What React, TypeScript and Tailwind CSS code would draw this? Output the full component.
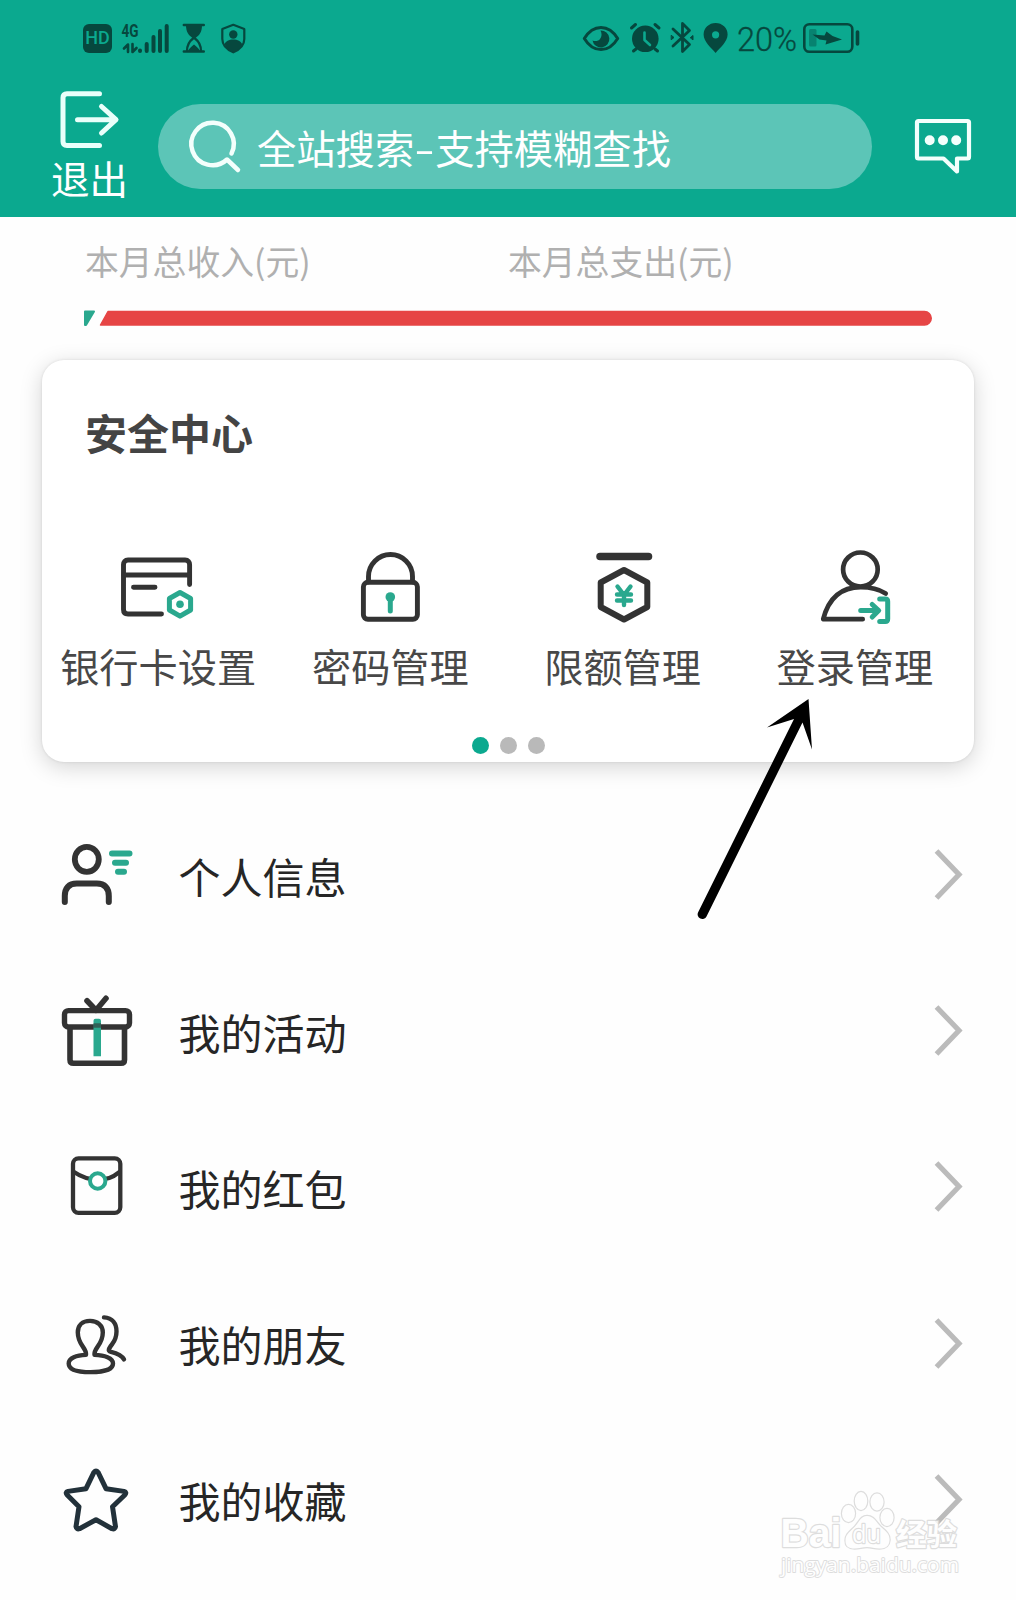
import React from "react";

type IconProps = {
  box: string;
  className: string;
  children: React.ReactNode;
};

const DARK = "#333333";
const TEAL = "#2aa88e";
const INK = "#06483e";

function Icon({ box, className, children }: IconProps) {
  return (
    <svg
      viewBox={box}
      className={"block shrink-0 overflow-visible " + className}
      fill="none"
      strokeLinecap="round"
      strokeLinejoin="round"
      aria-hidden="true"
    >
      {children}
    </svg>
  );
}

function StatusBar() {
  return (
    <div className="flex h-[76px] items-center pl-[83px] text-[#06483e]">
      <div className="flex h-[29px] w-[29px] items-center justify-center rounded-[6px] bg-[#06483e] font-['Roboto',sans-serif] text-[18px] leading-none font-medium text-[#0ba98f]">
        HD
      </div>
      <Icon box="121 22 49 31" className="ml-[9px] h-[31px] w-[49px]">
        <text x="121.5" y="36" textLength="17" lengthAdjust="spacingAndGlyphs" fill={INK} fontFamily="Roboto" fontWeight="700" fontSize="18">
          4G
        </text>
        <g stroke={INK} strokeWidth="4">
          <path d="M140 49.5v.5M146.700 43v7M153.500 36v14M160 30v20M166.700 25v25" />
        </g>
        <path d="M128 51V43.500l-4 4M132.500 43v8l4-4" stroke={INK} strokeWidth="2.600" />
      </Icon>
      <Icon box="183 24 22 29" className="ml-[13px] h-[29px] w-[22px]">
        <path d="M183.800 25h20M183.800 51.500h20" stroke={INK} strokeWidth="2.400" />
        <path d="M186 25h16c0 7-2.500 10-6.500 13h-3c-4-3-6.500-6-6.500-13z" fill={INK} />
        <path d="M187 51c0-6 2-9.500 6-12.500h2c4 3 6 6.500 6 12.500" stroke={INK} strokeWidth="2.200" />
        <path d="M188 51c1.500-3 3.500-4.500 6-6.500 2.500 2 4.500 3.500 6 6.500z" fill={INK} />
      </Icon>
      <Icon box="221 23 25 31" className="ml-[16px] h-[31px] w-[25px]">
        <path d="M233.300 24.800l11 4.200v10c0 6.500-4.500 10.500-11 13.300-6.500-2.800-11-6.800-11-13.300V29z" stroke={INK} strokeWidth="2.200" />
        <circle cx="233.300" cy="34.500" r="4.200" fill={INK} />
        <path d="M224.500 44.500c1-3.500 4.500-5 8.800-5s7.800 1.500 8.800 5c-1.800 3.700-5 6-8.800 7.800-3.800-1.800-7-4.100-8.800-7.800z" fill={INK} />
      </Icon>
      <Icon box="582 25 38 25" className="ml-[336px] h-[25px] w-[38px]">
        <path d="M584.300 37.500c9-14.800 24.400-14.800 33.400 0-9 14.800-24.400 14.800-33.400 0z" stroke={INK} strokeWidth="3" />
        <path d="M600.500 29.500a8.500 8.500 0 1 1-8 10c3 1.200 6 .5 7.500-1.500 2-2.500 2-5.500.5-8.500z" fill={INK} />
      </Icon>
      <Icon box="629 23 33 30" className="ml-[9px] h-[30px] w-[33px]">
        <circle cx="645.300" cy="38.800" r="13.300" fill={INK} />
        <path d="M631.500 28l4-3.500M659 28l-4-3.500M636 49l-2.500 2M655 49l2.500 2" stroke={INK} strokeWidth="3" />
        <path d="M644.500 32.500v7.500l5.500 5" stroke="#0ba98f" strokeWidth="2.600" />
      </Icon>
      <Icon box="671 22 24 32" className="ml-[9px] h-[32px] w-[24px]">
        <path d="M673 29l16.500 15.500-7 7V23.500l7 7L673 46" stroke={INK} strokeWidth="2.800" />
        <path d="M690.500 37.500l2.500-2v4zM671.500 35.500l2.500 2-2.500 2z" fill={INK} stroke={INK} />
      </Icon>
      <Icon box="703 23 25 30" className="ml-[8px] h-[30px] w-[25px]">
        <path fillRule="evenodd" d="M715.600 53c-4-5-12-11-12-18.500a12 11.500 0 0 1 24 0c0 7.500-8 13.500-12 18.500zm0-21.800a3.600 3.600 0 1 0 0 7.200 3.600 3.600 0 0 0 0-7.200z" fill={INK} />
      </Icon>
      <span className="ml-[9px] w-[61px] pt-[5px] font-['Roboto',sans-serif] text-[32.5px] leading-none font-light whitespace-nowrap [-webkit-text-stroke:0.3px_#06483e]">
        20%
      </span>
      <Icon box="803 23 57 30" className="ml-[5px] h-[30px] w-[57px]">
        <rect x="804.300" y="24.200" width="48" height="27.600" rx="5" stroke={INK} strokeWidth="2.600" />
        <rect x="809" y="29" width="7.500" height="17.500" rx="1.500" fill="#078370" />
        <path d="M857.500 32v12" stroke={INK} strokeWidth="3.600" />
        <path d="M812.500 34.500l12 1 2-4 6 4.500 9.500 3.500-16.500 5 1-4-7-1z" fill={INK} />
      </Icon>
    </div>
  );
}

function Header() {
  return (
    <header className="h-[217px] bg-[#0ba98f]">
      <StatusBar />
      <div className="flex items-start text-white">
        <button className="ml-[51px] flex w-[76px] flex-col items-center pt-[13px]">
          <Icon box="60 89 60 60" className="h-[60px] w-[60px]">
            <path d="M100.500 93.700H68c-2.500 0-4 1.500-4 4V141.500c0 2.500 1.500 4 4 4h32.500" stroke="#e9fffa" strokeWidth="5" />
            <path d="M78.500 119.700h38M102.500 106.500l14.500 13.200-14.500 13.300" stroke="#e9fffa" strokeWidth="5" />
          </Icon>
          <span className="mt-[9px] pl-px text-[38.5px] leading-[38px] whitespace-nowrap">退出</span>
        </button>
        <div className="mt-[28px] ml-[31px] flex h-[85px] w-[714px] items-center rounded-full bg-[#5cc5b7] pl-[30px]">
          <Icon box="187 120 53 53" className="h-[53px] w-[53px]">
            <path d="M230.500 153.500A21.200 21.200 0 1 0 226 159.500L237 170" stroke="#f3fffc" strokeWidth="4.500" />
          </Icon>
          <span className="ml-[16px] text-[39.3px] leading-none whitespace-nowrap">
            全站搜索<span className="inline-block w-[21px] origin-center scale-x-150 text-center">-</span>支持模糊查找
          </span>
        </div>
        <Icon box="914 118 58 56" className="mt-[42px] ml-[42px] h-[56px] w-[58px]">
          <path d="M918.500 121H967.500c1 0 1.500.5 1.500 1.500V157c0 1-.5 1.500-1.500 1.500H957v13L943.500 158.500h-25c-1 0-1.500-.5-1.500-1.500V122.500c0-1 .5-1.500 1.500-1.500z" stroke="#f3fffc" strokeWidth="4.200" />
          <path d="M929.700 140.300v0M943 140.300v0M956.200 140.300v0" stroke="#f3fffc" strokeWidth="10" />
        </Icon>
      </div>
    </header>
  );
}

function Summary() {
  return (
    <section className="h-[143px] pl-[84px]">
      <div className="grid h-[90px] grid-cols-[424px_1fr] items-center pb-[3px] text-[33.800px] leading-none text-[#b0b0b0]">
        <span className="pl-px">本月总收入(元)</span>
        <span>本月总支出(元)</span>
      </div>
      <Icon box="84 310 848 16" className="mt-[3px] h-[16px] w-[848px]">
        <path d="M85 311.500h9l-8 13.500h-1z" fill={TEAL} stroke={TEAL} strokeWidth="2" />
        <path d="M108 311.500H924.500a6.700 6.700 0 0 1 0 13.500H100.500z" fill="#e64545" stroke="#e64545" strokeWidth="1.500" />
      </Icon>
    </section>
  );
}

const tools = [
  {
    label: "银行卡设置",
    icon: (
      <Icon box="118 548 80 80" className="h-[80px] w-[80px]">
        <path d="M189.600 584.500V564.500c0-2.500-1.500-4.500-4.500-4.500H128c-3 0-4.500 2-4.500 4.500V609.500c0 3 1.500 4.500 4.500 4.500h33.500" stroke={DARK} strokeWidth="4.900" />
        <path d="M124 575h65M133.500 587.300h21.500" stroke={DARK} strokeWidth="4.900" />
        <path d="M180 592.500l10.600 6v11.500l-10.600 6.200-10.600-6.200V598.500z" stroke={TEAL} strokeWidth="5" />
        <circle cx="180" cy="604.300" r="3.800" fill={TEAL} />
      </Icon>
    ),
  },
  {
    label: "密码管理",
    icon: (
      <Icon box="350 548 80 80" className="h-[80px] w-[80px]">
        <path d="M368.500 582v-5.500a22 22 0 0 1 44 0V582" stroke={DARK} strokeWidth="4.900" />
        <rect x="363.400" y="582.300" width="54" height="37" rx="4.500" stroke={DARK} strokeWidth="4.900" />
        <circle cx="390.300" cy="597" r="4.800" fill={TEAL} />
        <path d="M390.300 598v13" stroke={TEAL} strokeWidth="5" />
      </Icon>
    ),
  },
  {
    label: "限额管理",
    icon: (
      <Icon box="583 548 80 80" className="h-[80px] w-[80px]">
        <path d="M600 556.500h48.500" stroke={DARK} strokeWidth="7.500" />
        <path d="M624 570l23.300 12.500v24.500L624 619.500l-23.300-12.500V582.500z" stroke={DARK} strokeWidth="6" />
        <path d="M617.500 586.500l6.500 8.500 6.500-8.500M617 594.500h14M617 600.500h14M624 595v10" stroke={TEAL} strokeWidth="4.400" />
      </Icon>
    ),
  },
  {
    label: "登录管理",
    icon: (
      <Icon box="815.300 548 80 80" className="h-[80px] w-[80px]">
        <ellipse cx="860.700" cy="569.500" rx="17.300" ry="17" stroke={DARK} strokeWidth="4.700" />
        <path d="M886 593.500c-8-5-16-6.300-25-6.300-20 0-32 11-37.500 32h39.500" stroke={DARK} strokeWidth="4.700" />
        <path d="M861 610.500h15M872.500 604.500l6.500 6-6.500 6.500M880 599h5.500c2 0 2.500 1 2.500 2.500V619c0 1.500-.5 2.500-2.500 2.500h-5.500" stroke={TEAL} strokeWidth="5" />
      </Icon>
    ),
  },
];

function SecurityCard() {
  return (
    <section className="ml-[42px] flex h-[402px] w-[932px] flex-col rounded-[22px] bg-white shadow-[0_5px_22px_rgba(0,0,0,0.17),0_0_3px_rgba(0,0,0,0.10)]">
      <h2 className="mt-[51px] ml-[43px] text-[42px] leading-[42px] font-bold text-[#444444]">安全中心</h2>
      <div className="mt-[95px] grid w-[929px] grid-cols-4">
        {tools.map((t) => (
          <button key={t.label} className="flex flex-col items-center">
            {t.icon}
            <span className="mt-[18px] text-[39.2px] leading-[39px] whitespace-nowrap text-[#484848]">{t.label}</span>
          </button>
        ))}
      </div>
      <div className="mt-[52px] flex items-center justify-center gap-[11px]">
        <span className="h-[17px] w-[17px] rounded-full bg-[#0ba98f]" />
        <span className="h-[17px] w-[17px] rounded-full bg-[#b9b9b9]" />
        <span className="h-[17px] w-[17px] rounded-full bg-[#b9b9b9]" />
      </div>
    </section>
  );
}

const rows = [
  {
    label: "个人信息",
    icon: (
      <Icon box="57 834 80 80" className="h-[80px] w-[80px]">
        <ellipse cx="86.800" cy="859.300" rx="12" ry="12.500" stroke={DARK} strokeWidth="5.800" />
        <path d="M64.800 902V896c0-8 4-12.500 12-12.500h20c8 0 12 4.500 12 12.500v6" stroke={DARK} strokeWidth="6" />
        <path d="M112 853.500h17.500M115 862.700h11M118 871.700h6" stroke={TEAL} strokeWidth="6" />
      </Icon>
    ),
  },
  {
    label: "我的活动",
    icon: (
      <Icon box="57 990.200 80 80" className="h-[80px] w-[80px]">
        <path d="M87 1001l9 9.500 10-12" stroke={DARK} strokeWidth="5.600" />
        <rect x="64.500" y="1010.800" width="65" height="16.400" rx="4" stroke={DARK} strokeWidth="5.400" />
        <path d="M70 1028v32c0 2 1 3.500 3.500 3.500h47.500c2.500 0 3.500-1.500 3.500-3.500V1028" stroke={DARK} strokeWidth="5.600" />
        <path d="M93.500 1056.500V1021q0-2 2-2h3.500q2 0 2 2v35.500z" fill={TEAL} />
        <path d="M93.500 1025.700h7.500" stroke={DARK} strokeWidth="4.500" strokeLinecap="butt" opacity="0.6" />
      </Icon>
    ),
  },
  {
    label: "我的红包",
    icon: (
      <Icon box="57 1146 80 80" className="h-[80px] w-[80px]">
        <rect x="73" y="1158.300" width="47.300" height="54.500" rx="5.500" stroke={DARK} strokeWidth="4.300" />
        <path d="M74 1172c8 5.500 14 7.500 23.500 7.500S112 1178 119.500 1172" stroke={DARK} strokeWidth="4.200" />
        <circle cx="97.700" cy="1181" r="7.700" fill="#fff" stroke={TEAL} strokeWidth="4" />
      </Icon>
    ),
  },
  {
    label: "我的朋友",
    icon: (
      <Icon box="57 1302.600 80 80" className="h-[80px] w-[80px]">
        <path d="M86 1354.500c.3-3-.5-4.500-3-8-3.500-5-5.200-9.500-5.200-14.500 0-7 4.500-11.500 12.200-11.500s12.800 4.500 12.800 11.500c0 5-1.700 9.500-5.300 14.500-2.500 3.500-3.300 5-3 8 10 .3 18.500 3 18.500 8.500 0 6.300-10.500 8.700-22.500 8.700s-21.800-2.400-21.800-8.700c0-5.500 7.800-8.200 17.300-8.500z" stroke={DARK} strokeWidth="4.400" />
        <path d="M104 1317c8.500.5 12.500 6 12.500 14 0 5.500-1.500 9-4.500 13-3.500 4.500-4.500 6.500-1 7.500 6 1.500 10.500 3 13 7.500" stroke={DARK} strokeWidth="4.400" />
      </Icon>
    ),
  },
  {
    label: "我的收藏",
    icon: (
      <Icon box="57 1458.800 80 80" className="h-[80px] w-[80px]">
        <path d="M94 1472q2-2.500 4 0l8 16.500 18 2.700q3 .8 1 3.300l-12.500 12 3 20q-.5 3-3.500 2L96 1519.500l-16.500 9q-3 1-3.500-2l3-20-12-12q-2-2.500 1-3.300L86 1488.500z" stroke="#22313a" strokeWidth="5" />
      </Icon>
    ),
  },
];

function Menu() {
  return (
    <nav className="mt-[34px]">
      {rows.map((r) => (
        <a key={r.label} className="flex h-[156.2px] items-center pr-[53px] pl-[57px] text-[#262626]">
          {r.icon}
          <span className="mt-[3px] ml-[41.5px] flex-1 text-[42px] leading-none">{r.label}</span>
          <Icon box="935 849 28 50" className="h-[50px] w-[28px]">
            <path d="M936.500 851l22.500 23.500-22.500 23.500" stroke="#bbbbbb" strokeWidth="5.200" strokeLinecap="butt" strokeLinejoin="miter" />
          </Icon>
        </a>
      ))}
    </nav>
  );
}

function Watermark() {
  return (
    <div className="pointer-events-none absolute top-[1490px] left-[776px] opacity-80">
      <Icon box="776 1490 190 90" className="h-[90px] w-[190px]">
        <g fill="#ffffff" stroke="#d6d6d6" strokeWidth="2.400" className="[paint-order:stroke]">
          <text x="780.5" y="1547" textLength="61" lengthAdjust="spacingAndGlyphs" fontFamily="Liberation Sans" fontWeight="700" fontSize="41">
            Bai
          </text>
          <ellipse cx="848.500" cy="1513.500" rx="6.500" ry="8.500" />
          <ellipse cx="861" cy="1501" rx="6.200" ry="9" />
          <ellipse cx="877" cy="1502" rx="6.500" ry="8.500" />
          <ellipse cx="887" cy="1517.500" rx="6.500" ry="8.500" />
          <path d="M867 1516c7 0 9 6 14 11 6 5 9 8 8.500 13.500-.5 6.500-5 8-10 8-5 0-8-1.500-12.500-1.500s-8 1.500-12.500 1.500c-6 0-9-2-9-8 0-6 4-8.500 9-13.500 5-5 6-11 12.500-11z" />
          <text x="852" y="1543" textLength="29" lengthAdjust="spacingAndGlyphs" fontFamily="Open Sans" fontSize="25">
            du
          </text>
          <text x="896" y="1545" textLength="61" lengthAdjust="spacingAndGlyphs" fontFamily="Noto Sans CJK SC" fontWeight="700" fontSize="30">
            经验
          </text>
          <text x="781" y="1572" textLength="178" lengthAdjust="spacingAndGlyphs" fontFamily="Open Sans" fontSize="20" strokeWidth="1.800">
            jingyan.baidu.com
          </text>
        </g>
      </Icon>
    </div>
  );
}

function PointerArrow() {
  return (
    <div className="pointer-events-none absolute top-[698px] left-[697px]">
      <Icon box="697 698 118 222" className="h-[222px] w-[118px]">
        <path d="M808.500 699L812 749.500 802.500 722.500 706.500 916.500A4.700 4.700 0 0 1 698 912.500L794 719 767 727.500z" fill="#000" />
      </Icon>
    </div>
  );
}

export default function App() {
  return (
    <main className="relative h-[1600px] w-[1016px] overflow-hidden bg-[#fefefe] font-['Noto_Sans_CJK_SC',sans-serif]">
      <Header />
      <Summary />
      <SecurityCard />
      <Menu />
      <PointerArrow />
      <Watermark />
    </main>
  );
}
